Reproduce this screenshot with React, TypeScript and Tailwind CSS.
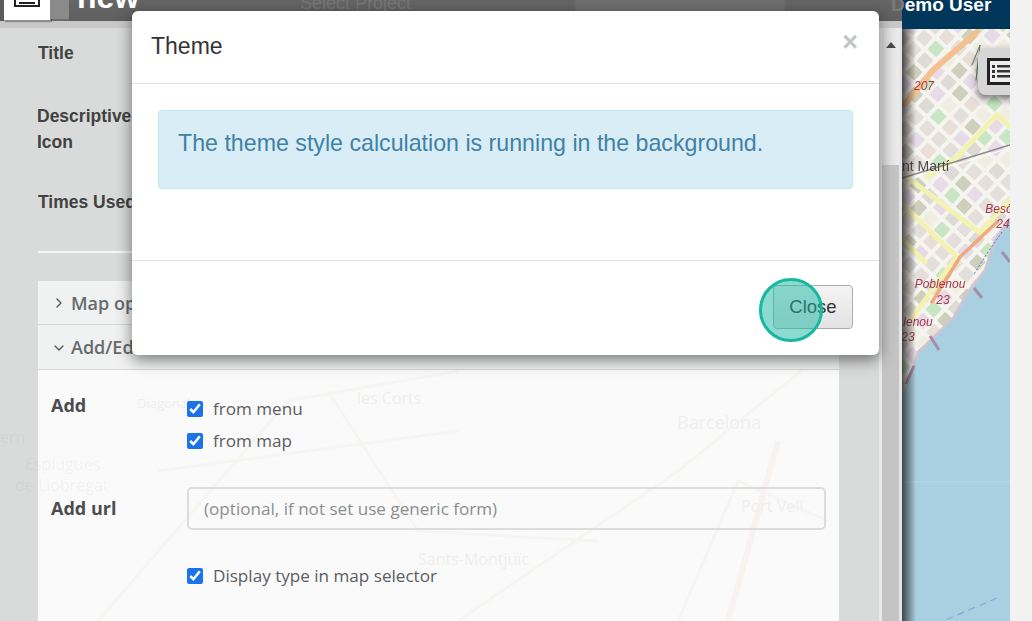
import React from "react";
import { ChevronRight, ChevronDown } from "lucide-react";

const sans = "font-['Liberation_Sans',Arial,sans-serif]";
const ui = "font-['Open_Sans','Noto_Sans',sans-serif]";

function MapSvg() {
  const palette = ["#dedbd6", "#e4dfdb", "#e6dbe6", "#cfcfbd", "#dedbd6", "#c8e6c4", "#e8e0d8", "#e6dbe6", "#dcd9d2", "#f0eee2"];
  const blocks: React.ReactNode[] = [];
  for (let i = -24; i < 24; i++) {
    for (let j = -30; j < 30; j++) {
      const c = palette[Math.abs(i * 7 + j * 13 + i * j) % palette.length];
      blocks.push(<rect key={`${i}_${j}`} x={956 + i * 16} y={300 + j * 16} width={12} height={12} rx={1} fill={c} />);
    }
  }
  return (
    <svg viewBox="902 29 108 592" className="absolute inset-0 w-full h-full blur-[0.6px]">
      <rect x="902" y="29" width="108" height="592" fill="#f6f4ef" />
      <g transform="rotate(43 956 300)">{blocks}</g>
      <g fill="none" strokeLinecap="round">
        <path d="M905 104L933 70L977 32" stroke="#f4c08e" strokeWidth="6" />
        <path d="M905 207L957 257M907 177L980 233M957 157L997 115L1010 127M927 177L957 157M980 233L1010 200M957 257L925 300L912 318M903 240L925 262" stroke="#f4f2b0" strokeWidth="5" />
        <path d="M997 222L960 257L932 302" stroke="#f0a97e" strokeWidth="3.5" />
        <path d="M902 178L1010 145" stroke="#8a8a84" strokeWidth="1.5" />
        <path d="M902 181L1010 148" stroke="#ffffff" strokeWidth="1" />
        <path d="M972 65L980 45L976 80" stroke="#5f7c5c" strokeWidth="1" />
      </g>
      <path d="M1010 218L995 240L985 270L968 292L953 318L933 338L918 352L910 378L902 395V621H1010Z" fill="#a9d0e0" />
      <path d="M1010 218L995 240L985 270L968 292L953 318L933 338L918 352L910 378" fill="none" stroke="#d5c2d2" strokeWidth="2.5" />
      <path d="M1002 232L988 252L974 274" fill="none" stroke="#4a7fd0" strokeWidth="1" strokeDasharray="2 2" />
      <path d="M1002 252L1010 262M974 288L982 298M930 336L939 350M914 366L906 384" stroke="#a88cab" strokeWidth="3" />
      <path d="M997 598L943 621" stroke="#8ba2e0" strokeWidth="1.2" strokeDasharray="7 5" fill="none" />
      <path d="M902 482H1010" stroke="#b8d9e6" strokeWidth="1" />
      <g fontFamily="'Liberation Sans',sans-serif" fontStyle="italic" fontSize="12" fill="#a8374f" textAnchor="middle">
        <text x="924" y="90">207</text>
        <text x="1002" y="213">Besòs</text>
        <text x="1003" y="228">24</text>
        <text x="940" y="288">Poblenou</text>
        <text x="943" y="304">23</text>
        <text x="918" y="326">lenou</text>
        <text x="908" y="341">23</text>
      </g>
      <text x="902" y="171" fontFamily="'Liberation Sans',sans-serif" fontSize="14" fill="#4a4a4a">nt Martí</text>
    </svg>
  );
}

function FaintMap() {
  const labels: [string, string][] = [
    ["les Corts", "left-[319px] top-[105px] text-[16px]"],
    ["Barcelona", "left-[639px] top-[128px] text-[18px]"],
    ["Port Vell", "left-[703px] top-[213px] text-[16px]"],
    ["Sants-Montjuïc", "left-[380px] top-[266px] text-[16px]"],
    ["Diagonal", "left-[99px] top-[113px] text-[13px]"],
  ];
  return (
    <div className="absolute inset-0 overflow-hidden pointer-events-none">
      <svg viewBox="0 0 801 340" className="absolute inset-0 w-full h-full">
        <g fill="none" stroke="#f6f5f2" strokeWidth="3">
          <path d="M60 340L250 120L420 90M420 340L640 190L800 60M120 190L420 150M640 340L700 200L790 240" />
          <path d="M690 340L740 160" stroke="#f7f3f0" strokeWidth="6" />
          <path d="M290 110L380 250L560 260" stroke="#f6f5f2" />
        </g>
      </svg>
      {labels.map(([t, c]) => (
        <span key={t} className={`absolute whitespace-nowrap text-[#eeefee] ${c} ${ui}`}>{t}</span>
      ))}
    </div>
  );
}

function Check({ label }: { label: string }) {
  return (
    <label className="h-8 flex items-center gap-[10px]">
      <input type="checkbox" defaultChecked className="size-4 m-0 accent-[#1a73e8]" />
      <span className="text-[17.1px] text-[#5a5d60]">{label}</span>
    </label>
  );
}

const sideLabels: [string, string][] = [
  ["ern", "left-0 top-[425px]"],
  ["Esplugues", "left-[25px] top-[452px]"],
  ["de Llobregat", "left-[15px] top-[473px]"],
];

export default function App() {
  return (
    <div className="relative w-[1032px] h-[621px] overflow-hidden flex bg-[#f2f2f2]">
      {/* Left dimmed page */}
      <div className={`relative w-[902px] h-full flex flex-col bg-[#d9dbda] ${sans}`}>
        <div className="h-[28px] shrink-0 bg-gradient-to-b from-[#bdbdbd] to-[#c9cac9] relative">
          <div className="h-[21px] flex bg-[#6d6d6d] overflow-visible">
            <div className="w-1 shrink-0 bg-[#5a5a5a]" />
            <div className="w-[47px] h-[21px] shrink-0 bg-white border-r border-b border-[#8d8d8d] shadow-[1px_1px_1px_rgba(0,0,0,.3)] flex justify-center items-end overflow-hidden">
              <div className="w-[26px] h-[14px] mb-[13px] border-2 border-[#222] flex flex-col justify-center items-center">
                <div className="w-[16px] h-[2px] bg-[#222] mt-[6px]" />
              </div>
            </div>
            <div className="w-[18px] shrink-0 bg-[#8a8a8a] h-[19px]" />
            <div className="flex-1 flex bg-gradient-to-b from-[#666666] to-[#5f5f5f] overflow-hidden">
              <span className="ml-[8px] -mt-[19px] text-[32px] leading-[32px] font-bold text-white w-[223px]">new</span>
              <span className="-mt-[7px] text-[18px] leading-[20px] text-[#777777] w-[275px]">Select Project</span>
              <span className="w-[210px] h-[21px] bg-[#6f6f6f]" />
            </div>
          </div>
        </div>

        <div className="flex-1 min-h-0 flex">
          <div className="w-[879px] shrink-0 pl-[38px] flex flex-col overflow-hidden text-[17.5px] font-bold text-[#424242]">
            <div className="h-[50px] flex items-center shrink-0">Title</div>
            <div className="mt-[25px] h-[52px] leading-[26px] -ml-px shrink-0">
              <div>Descriptive</div>
              <div>Icon</div>
            </div>
            <div className="mt-[34px] h-[26px] leading-[26px] shrink-0">Times Used</div>
            <div className="mt-[36px] h-[2px] w-[801px] bg-[#f6f6f6] shrink-0" />
            <div className={`relative mt-[28px] w-[801px] shrink-0 h-[340px] bg-[#fafafa] font-normal ${ui}`}>
              <FaintMap />
              <div className="relative h-[44px] pt-[1px] bg-[#f0f1f1] border-b border-[#d8d8d8] flex items-center pl-[13px] gap-[4px] text-[18px] font-semibold text-[#676b6e]">
                <ChevronRight size={16} strokeWidth={2} className="text-[#555]" />
                <span>Map options</span>
              </div>
              <div className="relative h-[45px] pt-[1px] bg-[#f0f1f1] border-b border-[#d8d8d8] flex items-center pl-[13px] gap-[4px] text-[18px] font-semibold text-[#676b6e]">
                <ChevronDown size={16} strokeWidth={2} className="text-[#555]" />
                <span>Add/Edit</span>
              </div>
              <div className="relative pt-[23px] pl-[13px]">
                <div className="flex">
                  <div className="w-[136px] text-[18px] leading-[24px] font-bold text-[#4a4d50]">Add</div>
                  <div className="flex flex-col">
                    <Check label="from menu" />
                    <Check label="from map" />
                  </div>
                </div>
                <div className="flex mt-[30px]">
                  <div className="w-[136px] h-[43px] flex items-center text-[18px] font-bold text-[#4a4d50]">Add url</div>
                  <input
                    readOnly
                    placeholder="(optional, if not set use generic form)"
                    className="w-[639px] h-[43px] px-[15px] border-2 border-[#dcdcdc] rounded-[5px] bg-transparent text-[17.1px] placeholder:text-[#8b8e90]"
                  />
                </div>
                <div className="flex mt-[30px] pl-[136px]">
                  <Check label="Display type in map selector" />
                </div>
              </div>
            </div>
          </div>

          {/* Scrollbar */}
          <div className="w-[3px] shrink-0 bg-[#e9e9e9]" />
          <div className="w-[17px] shrink-0 flex flex-col">
            <div className="h-[137px] bg-gradient-to-r from-[#dcdcdc] to-[#ececec] flex justify-center pt-[14px]">
              <div className="w-0 h-0 border-l-[5px] border-r-[5px] border-b-[6px] border-l-transparent border-r-transparent border-b-[#4a4a4a]" />
            </div>
            <div className="flex-1 bg-[#c3c4c3]" />
          </div>
          <div className="w-[3px] shrink-0 bg-[#e6e6e6]" />
        </div>

        {sideLabels.map(([t, c]) => (
          <span key={t} className={`absolute whitespace-nowrap text-[16px] text-black/[0.05] ${c} ${ui}`}>{t}</span>
        ))}
      </div>

      {/* Map column */}
      <div className="w-[108px] h-full flex flex-col shrink-0">
        <div className="h-[29px] shrink-0 bg-[#00365a]" />
        <div className="relative flex-1 overflow-hidden">
          <MapSvg />
          <div className="absolute inset-y-0 left-0 w-[14px] bg-gradient-to-r from-[#222]/80 to-transparent" />
          <div className="absolute left-[76px] top-[19px] w-[40px] h-[47px] bg-[#d6d6d6] rounded-l-[8px] shadow-[0_4px_8px_rgba(0,0,0,.5)] pt-[10px] pl-[9px]">
            <svg width="24" height="27" viewBox="0 0 24 27">
              <rect x="1.5" y="1.5" width="30" height="24" fill="#eee" stroke="#222" strokeWidth="3" />
              <g fill="#333">
                <rect x="5" y="7" width="3" height="3" />
                <rect x="10" y="7" width="14" height="2.5" />
                <rect x="5" y="12" width="3" height="3" />
                <rect x="10" y="12" width="14" height="2.5" />
                <rect x="5" y="17" width="3" height="3" />
                <rect x="10" y="17" width="14" height="2.5" />
              </g>
            </svg>
          </div>
        </div>
      </div>

      {/* User name over the top bars */}
      <div className={`absolute left-[891px] -top-[5px] text-[19px] leading-[20px] font-bold text-white whitespace-nowrap ${sans}`}>
        <span className="text-[#7a7a7a]">D</span>emo User
      </div>

      {/* Modal */}
      <div className={`absolute left-[132px] top-[11px] w-[747px] h-[344px] bg-white rounded-[6px] shadow-[0_5px_15px_rgba(0,0,0,.5)] flex flex-col ${sans}`}>
        <div className="h-[73px] shrink-0 border-b border-[#e5e5e5] flex items-center justify-between pl-[19px] pr-[21px] pb-[2px]">
          <span className="text-[23px] text-[#333]">Theme</span>
          <span className="text-[27px] font-bold text-[#c4c4c4] leading-none -mt-[8px]">×</span>
        </div>
        <div className="flex-1 border-b border-[#e5e5e5] pt-[26px] px-[26px]">
          <div className="h-[79px] bg-[#d9edf7] border border-[#bce8f1] rounded-[4px] pt-[16px] pl-[19px] text-[23.2px] leading-[32px] text-[#4181a6]">
            The theme style calculation is running in the background.
          </div>
        </div>
        <div className="h-[94px] shrink-0 flex justify-end items-start pt-[24px] pr-[26px]">
          <button className="w-[80px] h-[44px] border border-[#adadad] rounded-[4px] bg-gradient-to-b from-[#f4f4f4] to-[#e3e3e3] text-[18.5px] text-[#333]">
            Close
          </button>
        </div>
      </div>

      {/* Click highlight */}
      <div className="absolute left-[759px] top-[278px] size-[64px] rounded-full border-[3px] border-[#17b8a2] bg-[#17b8a2]/50" />
    </div>
  );
}
